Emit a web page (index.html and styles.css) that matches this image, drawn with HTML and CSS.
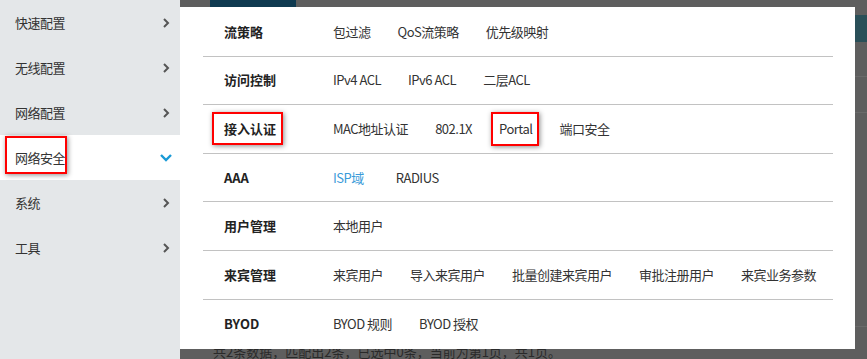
FILE: index.html
```html
<!DOCTYPE html>
<html lang="zh-CN">
<head>
    <meta charset="UTF-8">
    <title>网络安全</title>
    <link rel="stylesheet" href="styles.css">
</head>
<body>
    <div class="sidebar">
        <div class="side-item"><span>快速配置</span><svg class="chev" viewBox="0 0 12 12"><polyline points="4,2 8,6 4,10"/></svg></div>
        <div class="side-item"><span>无线配置</span><svg class="chev" viewBox="0 0 12 12"><polyline points="4,2 8,6 4,10"/></svg></div>
        <div class="side-item"><span>网络配置</span><svg class="chev" viewBox="0 0 12 12"><polyline points="4,2 8,6 4,10"/></svg></div>
        <div class="side-item active"><span class="marked side-mark">网络安全</span><svg class="chev down" viewBox="0 0 12 12"><polyline points="1,3 6,8 11,3"/></svg></div>
        <div class="side-item"><span>系统</span><svg class="chev" viewBox="0 0 12 12"><polyline points="4,2 8,6 4,10"/></svg></div>
        <div class="side-item"><span>工具</span><svg class="chev" viewBox="0 0 12 12"><polyline points="4,2 8,6 4,10"/></svg></div>
    </div>

    <div class="main">
        <!-- page behind the dropdown, dimmed -->
        <div class="bg-head">
            <div class="bg-logo"></div>
            <div class="bg-tab"></div>
        </div>
        <div class="bg-row r1"></div>
        <div class="bg-row r2"></div>
        <div class="bg-row r3"></div>
        <div class="bg-foot">共2条数据，匹配出2条，已选中0条，当前为第1页，共1页。</div>

        <div class="menu-panel">
            <div class="menu-row">
                <div class="menu-label">流策略</div>
                <a>包过滤</a><a>QoS流策略</a><a>优先级映射</a>
            </div>
            <div class="menu-row">
                <div class="menu-label">访问控制</div>
                <a>IPv4 ACL</a><a>IPv6 ACL</a><a>二层ACL</a>
            </div>
            <div class="menu-row">
                <div class="menu-label"><span class="marked label-mark">接入认证</span></div>
                <a>MAC地址认证</a><a>802.1X</a><a class="marked link-mark">Portal</a><a>端口安全</a>
            </div>
            <div class="menu-row">
                <div class="menu-label">AAA</div>
                <a class="current">ISP域</a><a class="wide">RADIUS</a>
            </div>
            <div class="menu-row">
                <div class="menu-label">用户管理</div>
                <a>本地用户</a>
            </div>
            <div class="menu-row">
                <div class="menu-label">来宾管理</div>
                <a>来宾用户</a><a>导入来宾用户</a><a>批量创建来宾用户</a><a>审批注册用户</a><a>来宾业务参数</a>
            </div>
            <div class="menu-row">
                <div class="menu-label">BYOD</div>
                <a>BYOD 规则</a><a>BYOD 授权</a>
            </div>
        </div>
    </div>
</body>
</html>
```

FILE: styles.css
```css
body {
    margin: 0;
    display: flex;
    height: 359px;
    overflow: hidden;
    background: #5e5e5e;
    font-family: "Noto Sans CJK SC", sans-serif;
    font-size: 13px;
    color: #333;
}

/* sidebar */
.sidebar {
    width: 180px;
    flex-shrink: 0;
    background: #e4e7e9;
}

.side-item {
    height: 45px;
    display: flex;
    align-items: center;
    justify-content: space-between;
    padding: 0 8px 0 15px;
    line-height: 20px;
    letter-spacing: -0.5px;
}

.side-item.active {
    background: #fff;
}

.chev {
    width: 12px;
    height: 12px;
    fill: none;
    stroke: #555;
    stroke-width: 2;
}

.chev.down {
    stroke: #1a9ad6;
    stroke-width: 2.4;
}

/* red annotation boxes */
.marked {
    position: relative;
}

.marked::after {
    content: "";
    position: absolute;
    border: 2px solid #f00;
    box-shadow: 1px 1px 5px rgba(0,0,0,0.45);
}

.side-mark::after {
    top: -12px;
    bottom: -6px;
    left: -10px;
    right: -2px;
}

.label-mark::after {
    top: -7px;
    bottom: -7px;
    left: -12px;
    right: -7px;
}

.link-mark::after {
    top: -7px;
    bottom: -7px;
    left: -8px;
    right: -7px;
}

/* dimmed page behind */
.main {
    flex: 1;
    position: relative;
}

.bg-head {
    height: 42px;
    display: flex;
    justify-content: space-between;
    align-items: flex-start;
}

.bg-logo {
    width: 86px;
    height: 40px;
    margin-left: 30px;
    background: #0f3a50;
}

.bg-tab {
    width: 12px;
    height: 27px;
    margin-top: 15px;
    background: #2a4f58;
}

.bg-row {
    border-bottom: 1px solid #6a6a6a;
    box-sizing: border-box;
}

.r1 { height: 35px; }
.r2 { height: 36px; }
.r3 { height: 214px; }

.bg-foot {
    padding: 15px 0 0 33px;
    line-height: 20px;
    white-space: nowrap;
    color: #2a2a2a;
}

/* dropdown menu */
.menu-panel {
    position: absolute;
    left: 0;
    top: 7px;
    width: 675px;
    height: 342px;
    box-sizing: border-box;
    padding: 1px 22px 0 23px;
    background: #fff;
}

.menu-row {
    height: 48.6px;
    box-sizing: border-box;
    display: flex;
    align-items: center;
    border-bottom: 1px solid #c2c2c2;
    line-height: 20px;
    white-space: nowrap;
}

.menu-row:last-child {
    border-bottom: none;
}

.menu-label {
    width: 109px;
    padding-left: 21px;
    flex-shrink: 0;
    font-weight: bold;
    color: #222;
}

.menu-row a {
    margin-right: 27px;
    letter-spacing: -0.5px;
    color: #333;
    cursor: pointer;
}

.menu-row a.wide {
    margin-left: 5px;
}

.menu-row a.current {
    color: #3a9bd9;
}
```
